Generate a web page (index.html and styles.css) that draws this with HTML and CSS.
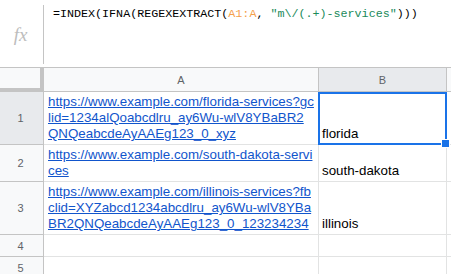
FILE: index.html
```html
<!DOCTYPE html>
<html lang="en">
<head>
  <meta charset="UTF-8" />
  <title>Sheet – REGEXEXTRACT</title>
  <link rel="stylesheet" href="styles.css">
</head>
<body>

  <div class="formula-bar">
    <div class="fx">fx</div>
    <div class="formula">=INDEX(IFNA(REGEXEXTRACT(<span class="ref">A1:A</span>, <span class="str">"m\/(.+)-services"</span>)))</div>
  </div>

  <div class="sheet">
    <div class="corner"></div>
    <div class="col-head">A</div>
    <div class="col-head active">B</div>
    <div class="col-head"></div>

    <div class="row-head active r-tall">1</div>
    <div class="cell link-cell"><a href="#">https://www.example.com/florida-services?gc<br>lid=1234alQoabcdlru_ay6Wu-wlV8YBaBR2<br>QNQeabcdeAyAAEg123_0_xyz</a></div>
    <div class="cell selected">florida</div>
    <div class="cell"></div>

    <div class="row-head r-mid">2</div>
    <div class="cell link-cell"><a href="#">https://www.example.com/south-dakota-servi<br>ces</a></div>
    <div class="cell">south-dakota</div>
    <div class="cell"></div>

    <div class="row-head r-tall">3</div>
    <div class="cell link-cell"><a href="#">https://www.example.com/illinois-services?fb<br>clid=XYZabcd1234abcdlru_ay6Wu-wlV8YBa<br>BR2QNQeabcdeAyAAEg123_0_123234234</a></div>
    <div class="cell">illinois</div>
    <div class="cell"></div>

    <div class="row-head">4</div>
    <div class="cell"></div>
    <div class="cell"></div>
    <div class="cell"></div>

    <div class="row-head">5</div>
    <div class="cell"></div>
    <div class="cell"></div>
    <div class="cell"></div>
  </div>

</body>
</html>
```

FILE: styles.css
```css
* {
  box-sizing: border-box;
}

body {
  margin: 0;
  background: #fff;
  font-family: "Liberation Sans", Arial, sans-serif;
  overflow: hidden;
}

/* formula bar */
.formula-bar {
  display: flex;
  height: 68px;
  border-bottom: 1px solid #c4c4c4;
}

.fx {
  width: 44px;
  margin: 5px 0 3px;
  border-right: 1px solid #c4c4c4;
  display: flex;
  align-items: center;
  justify-content: center;
  font-family: "Liberation Serif", serif;
  font-style: italic;
  font-size: 19px;
  color: #bdbdbd;
  padding-right: 2px;
}

.formula {
  padding: 7px 0 0 9px;
  font-family: "Liberation Mono", monospace;
  font-size: 11.7px;
  line-height: 14px;
  color: #000;
  white-space: nowrap;
}

.ref {
  color: #f5a04a;
}

.str {
  color: #1a8a5a;
}

/* grid */
.sheet {
  display: grid;
  grid-template-columns: 44px 275px 128px 1fr;
  grid-template-rows: 24px 53px 37px 53px 22px 22px;
}

.corner {
  background: #f8f9fa;
  border-right: 4px solid #c4c4c4;
  border-bottom: 4px solid #c4c4c4;
}

.col-head {
  background: #f8f9fa;
  border-right: 1px solid #c4c4c4;
  border-bottom: 1px solid #c4c4c4;
  display: flex;
  align-items: center;
  justify-content: center;
  font-size: 11px;
  color: #5f6368;
}

.row-head {
  background: #f8f9fa;
  border-right: 1px solid #c4c4c4;
  border-bottom: 1px solid #c4c4c4;
  display: flex;
  align-items: center;
  justify-content: center;
  font-size: 11px;
  color: #5f6368;
  padding-right: 2px;
}

.col-head.active,
.row-head.active {
  background: #e8eaed;
}

.cell {
  border-right: 1px solid #e2e3e3;
  border-bottom: 1px solid #e2e3e3;
  display: flex;
  align-items: flex-end;
  padding: 0 3px 2px 3px;
  font-size: 13.33px;
  line-height: 16px;
  color: #000;
  white-space: nowrap;
  overflow: hidden;
}

.link-cell {
  padding-left: 4px;
}

.link-cell a {
  color: #1155cc;
  text-decoration: underline;
}

.selected {
  position: relative;
  overflow: visible;
  z-index: 2;
}

.selected::after {
  content: "";
  position: absolute;
  top: 0;
  left: -1px;
  right: -1px;
  bottom: -1px;
  border: 2px solid #1a73e8;
}

.selected::before {
  content: "";
  position: absolute;
  right: -4px;
  bottom: -4px;
  width: 7px;
  height: 7px;
  background: #1a73e8;
  border: 1px solid #fff;
  z-index: 3;
}
```
